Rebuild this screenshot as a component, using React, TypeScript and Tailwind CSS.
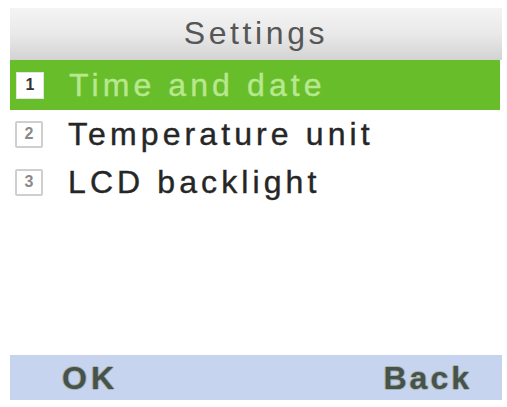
import React from 'react';

const items = [
  { n: '1', label: 'Time and date' },
  { n: '2', label: 'Temperature unit' },
  { n: '3', label: 'LCD backlight' },
];

const softKey = {
  textShadow:
    '1px 0 0 #a9b3ad, -1px 0 0 #a9b3ad, 0 1px 0 #a9b3ad, 0 -1px 0 #a9b3ad',
};

export default function App() {
  return (
    <div
      className="w-[507px] h-[407px] bg-white flex flex-col pl-[10px] pr-[5px] pt-[8px] pb-[7px]"
      style={{ fontFamily: '"Liberation Sans", Arial, sans-serif' }}
    >
      {/* Title bar */}
      <div className="h-[52px] flex items-center justify-center bg-gradient-to-b from-[#f4f4f4] via-[#e9e9e9] to-[#d3d3d3]">
        <span className="text-[32px] leading-none tracking-[3.6px] text-[#565656] pb-[2px]">Settings</span>
      </div>

      {/* Menu */}
      <div className="flex flex-col">
        {items.map((it, i) => {
          const active = i === 0;
          return (
            <div
              key={it.n}
              className={
                active
                  ? 'h-[50px] flex items-center bg-[#68bd2b] mr-[2px]'
                  : 'h-[48px] flex items-center'
              }
            >
              <div
                className={
                  active
                    ? 'ml-[6px] w-[28px] h-[27px] flex items-center justify-center bg-white border border-[#e4e4e4] text-[16px] font-bold text-[#333]'
                    : 'ml-[5px] w-[28px] h-[27px] flex items-center justify-center bg-white border-2 border-[#cfcfcf] rounded-[2px] text-[16px] font-bold text-[#8a8a8a]'
                }
              >
                {it.n}
              </div>
              <span
                className={
                  active
                    ? 'ml-[25px] text-[32px] leading-none tracking-[4.1px] text-[#b8e88e] [-webkit-text-stroke:0.4px_#b8e88e]'
                    : 'ml-[25px] text-[32px] leading-none tracking-[4.1px] text-[#262626] [-webkit-text-stroke:0.4px_#262626]'
                }
              >
                {it.label}
              </span>
            </div>
          );
        })}
      </div>

      <div className="flex-1" />

      {/* Soft keys */}
      <div className="h-[45px] flex items-center justify-between bg-[#c7d4ef] pl-[52px] pr-[30px]">
        <span className="text-[32px] leading-none font-bold tracking-[4px] text-[#46524c]" style={softKey}>
          OK
        </span>
        <span className="text-[32px] leading-none font-bold tracking-[3px] text-[#46524c]" style={softKey}>
          Back
        </span>
      </div>
    </div>
  );
}
